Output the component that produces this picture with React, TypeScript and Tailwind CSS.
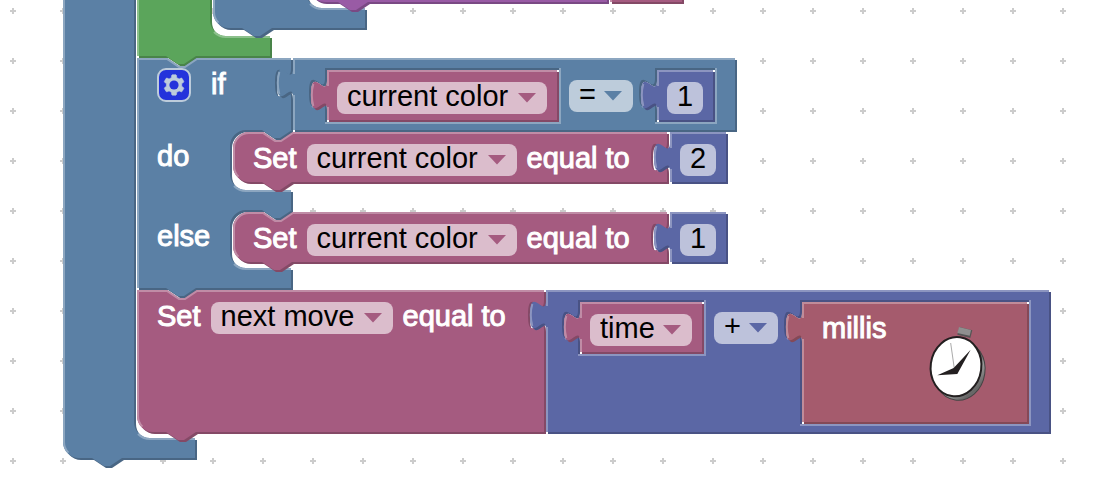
import type { ReactNode } from "react";

type Hue = "blue" | "green" | "pink" | "indigo" | "red" | "purple";

const HUES: Record<Hue, { body: string; dark: string; light: string; text: string; field: string }> = {
  blue: { body: "#5b80a5", dark: "#496684", light: "#8ca6c0", text: "text-[#5b80a5]", field: "bg-[#bdccdb]" },
  green: { body: "#5ba55b", dark: "#498449", light: "#8cc08c", text: "text-[#5ba55b]", field: "bg-[#bddbbd]" },
  pink: { body: "#a55b80", dark: "#844966", light: "#c08ca6", text: "text-[#a55b80]", field: "bg-[#dbbdcc]" },
  indigo: { body: "#5b67a5", dark: "#495284", light: "#8c95c0", text: "text-[#5b67a5]", field: "bg-[#bdc2db]" },
  red: { body: "#a55b6d", dark: "#844957", light: "#c08c99", text: "text-[#a55b6d]", field: "bg-[#dbbdc5]" },
  purple: { body: "#995ba5", dark: "#7a4984", light: "#b88cc0", text: "text-[#995ba5]", field: "bg-[#d6bddb]" },
};

const NOTCH = "l12,8 6,0 12,-8";
const NOTCH_BACK = "l-12,8 -6,0 -12,-8";
const TAB_DOWN = "v10 c0,20 -16,-16 -16,15 s16,-5 16,15";
const TAB_UP = "c0,-20 -16,16 -16,-15 s16,5 16,-15";

/** Block with an output tab on its left edge. */
const valueBody = (w: number, h: number) => `M0,0 H${w} V${h} H0 V40 ${TAB_UP} z`;
const valueLight = (w: number, h: number) =>
  `M1,${h} V37 m-14.7,-1 q-3,-11 0,-22 m14.7,2 V1 H${w}`;

/** Opening in a block for an inline value whose top-left corner is at (x, y). */
const hole = (x: number, y: number, w: number, h: number) =>
  `M${x - 2},${y - 2} H${x + w + 2} V${y + h + 2} H${x - 2} V${y + 38} ${TAB_UP} z`;
const holeLight = (x: number, y: number, w: number, h: number) =>
  `M${x - 2},${y + h + 3} H${x + w + 3} V${y - 2} M${x - 15},${y + 37} l7.4,-4.2`;

function Shape({ hue, body, light }: { hue: Hue; body: string; light: string }) {
  const c = HUES[hue];
  return (
    <svg aria-hidden="true" className="pointer-events-none absolute left-0 top-0 -z-10 size-full overflow-visible" fill="none">
      <path d={body} fill={c.dark} fillRule="evenodd" transform="translate(2 2)" />
      <path d={body} fill={c.body} fillRule="evenodd" />
      <path d={light} stroke={c.light} strokeWidth="2" />
    </svg>
  );
}

function Block(props: { hue: Hue; body: string; light: string; className: string; children?: ReactNode }) {
  return (
    <div className={`relative isolate shrink-0 ${props.className}`}>
      <Shape hue={props.hue} body={props.body} light={props.light} />
      {props.children}
    </div>
  );
}

function Label({ children }: { children: ReactNode }) {
  return <span className="whitespace-nowrap text-white [-webkit-text-stroke:1px_white]">{children}</span>;
}

function Dropdown(props: { hue: Hue; label: string; options: string[]; className: string }) {
  const c = HUES[props.hue];
  return (
    <div className={`relative h-8 shrink-0 ${props.className}`}>
      <select
        aria-label={props.label}
        className={`block h-8 w-full appearance-none rounded-lg px-[10px] pb-1 leading-7 text-black outline-none ${c.field}`}
      >
        {props.options.map((o) => (
          <option key={o}>{o}</option>
        ))}
      </select>
      <svg
        aria-hidden="true"
        viewBox="0 0 18 10"
        className={`pointer-events-none absolute right-[11px] top-[11px] h-[10px] w-[18px] ${c.text}`}
      >
        <path d="M0,0 H18 L9,9.5 z" fill="currentColor" />
      </svg>
    </div>
  );
}

function VariableBlock({ name, wide }: { name: string; wide?: boolean }) {
  const w = wide ? 230 : 122;
  return (
    <Block
      hue="pink"
      body={valueBody(w, 50)}
      light={valueLight(w, 50)}
      className={`h-[52px] py-3 pl-[10px] pr-3 ${wide ? "w-[232px]" : "w-[124px]"}`}
    >
      <Dropdown hue="pink" label="Variable" options={[name]} className="w-full" />
    </Block>
  );
}

function NumberBlock({ value }: { value: string }) {
  return (
    <Block hue="indigo" body={valueBody(56, 50)} light={valueLight(56, 50)} className="h-[52px] w-[58px] px-[10px] py-3">
      <input
        aria-label="Number"
        defaultValue={value}
        className="block h-8 w-9 rounded-lg bg-[#bdc2db] pb-1 text-center leading-7 text-black outline-none"
      />
    </Block>
  );
}

function SetColorBlock({ value }: { value: string }) {
  return (
    <Block
      hue="pink"
      body={`M16,0 H30 ${NOTCH} H434 ${TAB_DOWN} V50 H59 ${NOTCH_BACK} H16 a16,16 0 0 1 -16,-16 V16 a16,16 0 0 1 16,-16 z`}
      light={`M5.4,44.6 A15,15 0 0 1 1,34 V16 A15,15 0 0 1 16,1 H30 ${NOTCH} H434 M424,38.6 l7.4,-4.2`}
      className="flex h-[52px]"
    >
      <div className="flex w-[437px] gap-[10px] pl-5 pt-3">
        <Label>Set</Label>
        <Dropdown hue="pink" label="Variable" options={["current color"]} className="w-[210px]" />
        <Label>equal to</Label>
      </div>
      <NumberBlock value={value} />
    </Block>
  );
}

function GearButton() {
  return (
    <button type="button" aria-label="Configure if block" className="block size-[34px] opacity-60">
      <svg viewBox="-0.5 -0.5 17 17" className="size-full">
        <rect width="16" height="16" rx="4" fill="#00f" stroke="#fff" />
        <path
          fill="#fff"
          stroke="#fff"
          strokeWidth="0.3"
          d="m4.203,7.296 0,1.368 -0.92,0.677 -0.11,0.41 0.9,1.559 0.41,0.11 1.043,-0.457 1.187,0.683 0.127,1.134 0.3,0.3 1.8,0 0.3,-0.299 0.127,-1.138 1.185,-0.682 1.046,0.458 0.409,-0.11 0.9,-1.559 -0.11,-0.41 -0.92,-0.677 0,-1.366 0.92,-0.677 0.11,-0.41 -0.9,-1.559 -0.409,-0.109 -1.046,0.458 -1.185,-0.682 -0.127,-1.138 -0.3,-0.299 -1.8,0 -0.3,0.3 -0.126,1.135 -1.187,0.682 -1.043,-0.457 -0.41,0.11 -0.899,1.559 0.108,0.409z"
        />
        <circle cx="8" cy="8" r="2.3" fill="#00f" />
      </svg>
    </button>
  );
}

function Stopwatch() {
  return (
    <svg viewBox="440 135 186 234" className="h-[78px] w-[62px]" role="img" aria-label="Stopwatch">
      <defs>
        <linearGradient id="rim" x1="0" y1="0" x2="1" y2="1">
          <stop offset="0.4" stopColor="#222" />
          <stop offset="0.65" stopColor="#999" />
          <stop offset="0.82" stopColor="#666" />
          <stop offset="1" stopColor="#888" />
        </linearGradient>
      </defs>
      <path d="M537,141 L576,151 L570,174 L531,164 z" fill="#555" />
      <path d="M536,141 L572,150 L568,167 L531,159 z" fill="#8f8f8f" />
      <ellipse cx="537" cy="271" rx="77" ry="90" transform="rotate(8 537 271)" fill="url(#rim)" stroke="#444" strokeWidth="3" />
      <ellipse cx="527" cy="260" rx="76" ry="89" transform="rotate(8 527 260)" fill="#fff" stroke="#231f20" strokeWidth="6" />
      <path d="M511,189 L522,266" stroke="#aaa" strokeWidth="3" />
      <path d="M471,286 L520,264 L571,209 L531,282 z" fill="#231f20" />
    </svg>
  );
}

function CompareBlock() {
  return (
    <Block
      hue="blue"
      body={`${valueBody(442, 72)} ${hole(34, 12, 230, 50)} ${hole(364, 12, 56, 50)}`}
      light={`${valueLight(442, 72)} ${holeLight(34, 12, 230, 50)} ${holeLight(364, 12, 56, 50)}`}
      className="flex h-[74px] pl-[34px] pr-[22px] pt-3"
    >
      <VariableBlock name="current color" wide />
      <div className="ml-[10px] mr-6 pt-[10px]">
        <Dropdown hue="blue" label="Comparison" options={["=", "≠", "<", ">"]} className="w-16" />
      </div>
      <NumberBlock value="1" />
    </Block>
  );
}

function IfBlock() {
  const cavity = (bottom: number) =>
    `H155 ${NOTCH_BACK} H109 a16,16 0 0 0 -16,16 V${bottom - 16} a16,16 0 0 0 16,16 H154`;
  return (
    <Block
      hue="blue"
      body={`M0,0 H30 ${NOTCH} H154 ${TAB_DOWN} V72 ${cavity(132)} V152 ${cavity(210)} V230 H59 ${NOTCH_BACK} H0 z`}
      light={`M1,230 V1 H30 ${NOTCH} H154 M144,38.6 l7.4,-4.2 M97,128 A17,17 0 0 0 109,133 H154 M97,206 A17,17 0 0 0 109,211 H154`}
      className="flex flex-col"
    >
      <div className="flex h-[74px]">
        <div className="flex w-[156px] gap-5 pl-5 pt-[10px]">
          <GearButton />
          <div className="pt-[2px]">
            <Label>if</Label>
          </div>
        </div>
        <CompareBlock />
      </div>
      <div className="flex h-20">
        <div className="w-24 pl-5 pt-[10px]">
          <Label>do</Label>
        </div>
        <SetColorBlock value="2" />
      </div>
      <div className="flex h-[78px]">
        <div className="w-24 pl-5 pt-[10px]">
          <Label>else</Label>
        </div>
        <SetColorBlock value="1" />
      </div>
    </Block>
  );
}

function SumBlock() {
  return (
    <Block
      hue="indigo"
      body={`${valueBody(503, 142)} ${hole(34, 12, 122, 50)} ${hole(256, 12, 225, 120)}`}
      light={`${valueLight(503, 142)} ${holeLight(34, 12, 122, 50)} ${holeLight(256, 12, 225, 120)}`}
      className="flex h-36 pl-[34px] pr-[22px] pt-3"
    >
      <VariableBlock name="time" />
      <div className="ml-[10px] mr-6 pt-[10px]">
        <Dropdown hue="indigo" label="Operator" options={["+", "-", "×", "÷"]} className="w-16" />
      </div>
      <Block
        hue="red"
        body={valueBody(225, 120)}
        light={valueLight(225, 120)}
        className="flex h-[122px] w-[227px] justify-between pl-5 pr-10 pt-3"
      >
        <Label>millis</Label>
        <div className="pt-[11px]">
          <Stopwatch />
        </div>
      </Block>
    </Block>
  );
}

function NextMoveBlock() {
  return (
    <Block
      hue="pink"
      body={`M0,0 H30 ${NOTCH} H407 ${TAB_DOWN} V142 H59 ${NOTCH_BACK} H16 a16,16 0 0 1 -16,-16 z`}
      light={`M5.4,136.6 A15,15 0 0 1 1,126 V1 H30 ${NOTCH} H407 M397,38.6 l7.4,-4.2`}
      className="flex h-36"
    >
      <div className="flex w-[409px] gap-[10px] pl-5 pt-3">
        <Label>Set</Label>
        <Dropdown hue="pink" label="Variable" options={["next move"]} className="w-[182px]" />
        <Label>equal to</Label>
      </div>
      <SumBlock />
    </Block>
  );
}

function UpperBlocks() {
  return (
    <Block
      hue="green"
      body={`M0,-20 V56 H29 ${NOTCH} H133 V36 H89 a16,16 0 0 1 -16,-16 V-20 z`}
      light="M1,56 V-20 M77,32 A17,17 0 0 0 89,37 H133"
      className="flex h-[58px] pl-[76px]"
    >
      <Block
        hue="blue"
        body={`M0,-20 V12 a16,16 0 0 0 16,16 H29 ${NOTCH} H152 V8 H109 a16,16 0 0 1 -16,-16 V-20 z`}
        light="M5.4,22.6 A15,15 0 0 1 1,12 V-20 M97,4 A17,17 0 0 0 109,9 H152"
        className="flex h-[30px] pl-24"
      >
        <Block
          hue="purple"
          body={`M0,-20 V-14 a16,16 0 0 0 16,16 H29 ${NOTCH} H298 V-20 z`}
          light="M1,-14 V-20"
          className="flex h-1 pl-[301px]"
        >
          <Block hue="pink" body="M0,-20 V2 H72 V-20 z" light="M1,2 V-20" className="h-1 w-[74px]" />
        </Block>
      </Block>
    </Block>
  );
}

export default function App() {
  return (
    <main className="relative h-screen overflow-hidden bg-white font-['Liberation_Sans',Arial,sans-serif] text-[29px] leading-7">
      <svg aria-hidden="true" className="absolute inset-0 size-full">
        <defs>
          <pattern id="grid" x="-12" y="-14" width="50" height="50" patternUnits="userSpaceOnUse">
            <path d="M22,25 h6 M25,22 v6" stroke="#ccc" strokeWidth="2" />
          </pattern>
        </defs>
        <rect width="100%" height="100%" fill="url(#grid)" />
      </svg>
      <div className="absolute left-[63px] top-0">
        <Block
          hue="blue"
          body={`M0,-20 V442 a16,16 0 0 0 16,16 H29 ${NOTCH} H132 V438 H87 a16,16 0 0 1 -16,-16 V-20 z`}
          light="M5.4,452.6 A15,15 0 0 1 1,442 V-20 M75,434 A17,17 0 0 0 87,439 H132"
          className="flex flex-col items-start pb-[26px] pl-[74px]"
        >
          <UpperBlocks />
          <IfBlock />
          <NextMoveBlock />
        </Block>
      </div>
    </main>
  );
}
